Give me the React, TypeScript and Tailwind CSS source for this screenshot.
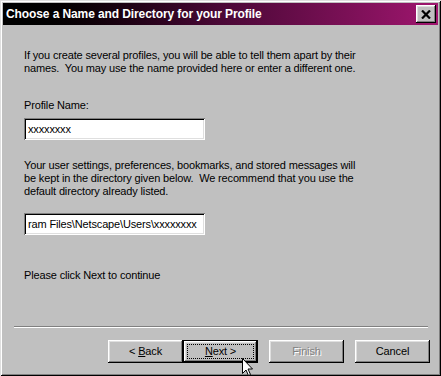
const raised =
  'shadow-[inset_-1px_-1px_0_#000,inset_1px_1px_0_#fff,inset_-2px_-2px_0_#808080,inset_2px_2px_0_#dfdfdf]';
const sunken =
  'shadow-[inset_1px_1px_0_#808080,inset_-1px_-1px_0_#fff,inset_2px_2px_0_#000,inset_-2px_-2px_0_#dfdfdf]';

const font = { fontFamily: '"Liberation Sans", Arial, sans-serif' };

const Button = ({
  children,
  isDefault,
  disabled,
}: {
  children: React.ReactNode;
  isDefault?: boolean;
  disabled?: boolean;
}) => {
  if (isDefault) {
    return (
      <div className="w-[75px] h-[23px] border border-black bg-[#c0c0c0]">
        <div className={`w-full h-full p-[3px] ${raised}`}>
          <div className="w-full h-full border border-dotted border-black flex items-center justify-center text-[11px] text-black">
            {children}
          </div>
        </div>
      </div>
    );
  }
  return (
    <div
      className={`w-[75px] h-[23px] bg-[#c0c0c0] flex items-center justify-center text-[11px] ${raised} ${
        disabled ? 'text-[#808080] [text-shadow:1px_1px_0_#fff]' : 'text-black'
      }`}
    >
      {children}
    </div>
  );
};

const Field = ({ value }: { value: string }) => (
  <div
    className={`w-[181px] h-[22px] bg-white pl-[4px] flex items-center text-[11px] text-black overflow-hidden whitespace-nowrap ${sunken}`}
  >
    {value}
  </div>
);

export default function App() {
  return (
    <div
      className="w-[441px] h-[376px] bg-[#c0c0c0] p-[3px] flex flex-col shadow-[inset_1px_1px_0_#dfdfdf,inset_-1px_-1px_0_#000,inset_2px_2px_0_#fff,inset_-2px_-2px_0_#808080] relative tracking-[-0.15px]"
      style={font}
    >
      {/* title bar */}
      <div className="h-[22px] bg-gradient-to-r from-black via-[#4a0836] to-[#a0166f] flex items-center justify-between pl-[3px] pr-[2px]">
        <span className="text-white font-bold text-[12px] tracking-[-0.1px]">
          Choose a Name and Directory for your Profile
        </span>
        <div className={`w-[20px] h-[18px] bg-[#c0c0c0] flex items-center justify-center ${raised}`}>
          <svg width="10" height="9" viewBox="0 0 10 9">
            <path d="M1 0.5 L9 8.5 M9 0.5 L1 8.5" stroke="#000" strokeWidth="2.2" />
          </svg>
        </div>
      </div>

      {/* body */}
      <div className="flex flex-col pl-[21px] text-[11px] leading-[13px] text-black">
        <p className="mt-[24px]">
          If you create several profiles, you will be able to tell them apart by their
          <br />
          names.&nbsp; You may use the name provided here or enter a different one.
        </p>
        <p className="mt-[24px]">Profile Name:</p>
        <div className="mt-[6px]">
          <Field value="xxxxxxxx" />
        </div>
        <p className="mt-[19px]">
          Your user settings, preferences, bookmarks, and stored messages will
          <br />
          be kept in the directory given below.&nbsp; We recommend that you use the
          <br />
          default directory already listed.
        </p>
        <div className="mt-[15px]">
          <Field value="ram Files\Netscape\Users\xxxxxxxx" />
        </div>
        <p className="mt-[34px]">Please click Next to continue</p>
      </div>

      {/* separator */}
      <div className="mt-[44px] ml-[11px] mr-[10px] h-[2px] border-t border-t-[#808080] border-b border-b-white" />

      {/* buttons */}
      <div className="mt-[12px] flex pl-[105px]">
        <Button>
          {'<\u00a0'}
          <u>B</u>ack
        </Button>
        <Button isDefault>
          <u>N</u>ext{'\u00a0>'}
        </Button>
        <div className="ml-[11px]">
          <Button disabled>Finish</Button>
        </div>
        <div className="ml-[11px]">
          <Button>Cancel</Button>
        </div>
      </div>

      {/* mouse cursor */}
      <svg
        className="absolute left-[242px] top-[358px]"
        width="12"
        height="19"
        viewBox="0 0 12 19"
      >
        <path
          d="M0.5 0.5 L0.5 15.5 L4 12 L6.5 17.5 L8.5 16.5 L6 11 L10.5 11 Z"
          fill="#fff"
          stroke="#000"
          strokeWidth="1"
        />
      </svg>
    </div>
  );
}
